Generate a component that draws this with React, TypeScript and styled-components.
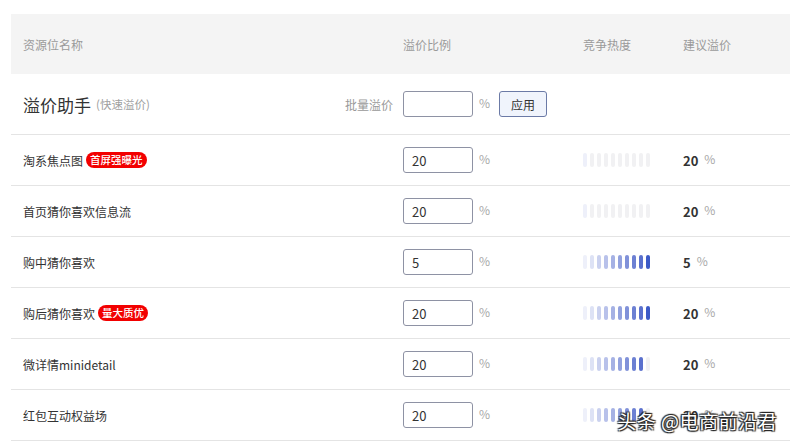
import React from "react";
import styled, { createGlobalStyle } from "styled-components";

const GlobalStyle = createGlobalStyle`
  html, body {
    margin: 0;
    padding: 0;
    background: #fff;
    font-family: "Noto Sans CJK SC", "Noto Sans", sans-serif;
  }
`;

const Page = styled.div`
  position: relative;
  width: 790px;
  height: 444px;
  overflow: hidden;
  padding: 14px 0 0 11px;
  box-sizing: border-box;
`;

const COLS = "380px 180px 100px 1fr";

const HeaderRow = styled.div`
  display: grid;
  grid-template-columns: ${COLS};
  height: 60px;
  align-items: center;
  background: #f4f4f4;
`;

const HeaderCell = styled.div`
  padding-left: 12px;
  font-size: 12px;
  color: #9a9a9a;
`;

const Row = styled.div<{ $tall?: boolean }>`
  display: grid;
  grid-template-columns: ${COLS};
  height: ${(p) => (p.$tall ? 60 : 50)}px;
  align-items: center;
  border-bottom: 1px solid #e4e4e4;
`;

const Cell = styled.div`
  display: flex;
  align-items: center;
  padding-left: 12px;
  font-size: 12px;
  color: #333;
`;

const HelperTitle = styled.div`
  display: flex;
  align-items: center;
  padding-left: 12px;
`;

const TitleText = styled.span`
  font-size: 17px;
  color: #333;
`;

const TitleHint = styled.span`
  margin-left: 5px;
  font-size: 11.5px;
  color: #a0a0a0;
`;

const BatchLabel = styled.span`
  margin-left: auto;
  margin-right: -2px;
  font-size: 12px;
  color: #999;
`;

const Input = styled.div`
  width: 70px;
  height: 26px;
  box-sizing: border-box;
  border: 1px solid #8e92a4;
  border-radius: 3px;
  padding-left: 8px;
  display: flex;
  align-items: center;
  font-size: 13px;
  color: #333;
`;

const Percent = styled.span`
  margin-left: 6px;
  margin-top: -4px;
  font-size: 12px;
  color: #a8a8a8;
`;

const ApplyButton = styled.button`
  margin-left: 9px;
  width: 48px;
  height: 26px;
  border: 1px solid #6b7aa6;
  border-radius: 3px;
  background: #f0f4fc;
  font-family: inherit;
  font-size: 12px;
  color: #333;
  padding: 0;
`;

const Tag = styled.span`
  margin-left: 3px;
  display: inline-flex;
  align-items: center;
  height: 16px;
  padding: 0 4px;
  border-radius: 8px;
  background: #f20000;
  color: #fff;
  font-size: 10.5px;
  font-weight: 500;
  line-height: 16px;
`;

const Bars = styled.div`
  display: flex;
  gap: 3px;
`;

const Bar = styled.span<{ $color: string }>`
  width: 4px;
  height: 14px;
  border-radius: 2px;
  background: ${(p) => p.$color};
`;

const Suggest = styled.div`
  display: flex;
  align-items: center;
  padding-left: 12px;
`;

const SuggestNum = styled.span`
  font-size: 13px;
  font-weight: bold;
  color: #333;
`;

const Watermark = styled.div`
  position: absolute;
  right: 13px;
  bottom: 10px;
  font-size: 19px;
  color: #fff;
  letter-spacing: 0.5px;
  text-shadow:
    1px 1px 1px #222,
    -1px -1px 1px #222,
    1px -1px 1px #222,
    -1px 1px 1px #222;
`;

const HEAT = [
  "#eef0fa",
  "#dde2f5",
  "#cad1ef",
  "#b8c1ea",
  "#a5b1e4",
  "#92a1de",
  "#8091d9",
  "#6c80d3",
  "#5a70cd",
  "#3c5ac7",
];

function Heat({ level }: { level: number }) {
  return (
    <Bars>
      {HEAT.map((c, i) => (
        <Bar key={i} $color={i < level ? c : "#f1f1f3"} />
      ))}
    </Bars>
  );
}

const rows = [
  { name: "淘系焦点图", tag: "首屏强曝光", value: "20", heat: 1, suggest: "20" },
  { name: "首页猜你喜欢信息流", value: "20", heat: 1, suggest: "20" },
  { name: "购中猜你喜欢", value: "5", heat: 10, suggest: "5" },
  { name: "购后猜你喜欢", tag: "量大质优", value: "20", heat: 10, suggest: "20" },
  { name: "微详情minidetail", value: "20", heat: 9, suggest: "20" },
  { name: "红包互动权益场", value: "20", heat: 9, suggest: "20" },
];

export default function App() {
  return (
    <Page>
      <GlobalStyle />
      <HeaderRow>
        <HeaderCell>资源位名称</HeaderCell>
        <HeaderCell>溢价比例</HeaderCell>
        <HeaderCell>竞争热度</HeaderCell>
        <HeaderCell>建议溢价</HeaderCell>
      </HeaderRow>
      <Row $tall>
        <HelperTitle>
          <TitleText>溢价助手</TitleText>
          <TitleHint>(快速溢价)</TitleHint>
          <BatchLabel>批量溢价</BatchLabel>
        </HelperTitle>
        <Cell>
          <Input />
          <Percent>%</Percent>
          <ApplyButton>应用</ApplyButton>
        </Cell>
        <div />
        <div />
      </Row>
      {rows.map((r) => (
        <Row key={r.name}>
          <Cell>
            {r.name}
            {r.tag && <Tag>{r.tag}</Tag>}
          </Cell>
          <Cell>
            <Input>{r.value}</Input>
            <Percent>%</Percent>
          </Cell>
          <Cell>
            <Heat level={r.heat} />
          </Cell>
          <Suggest>
            <SuggestNum>{r.suggest}</SuggestNum>
            <Percent>%</Percent>
          </Suggest>
        </Row>
      ))}
      <Watermark>头条 @电商前沿君</Watermark>
    </Page>
  );
}
